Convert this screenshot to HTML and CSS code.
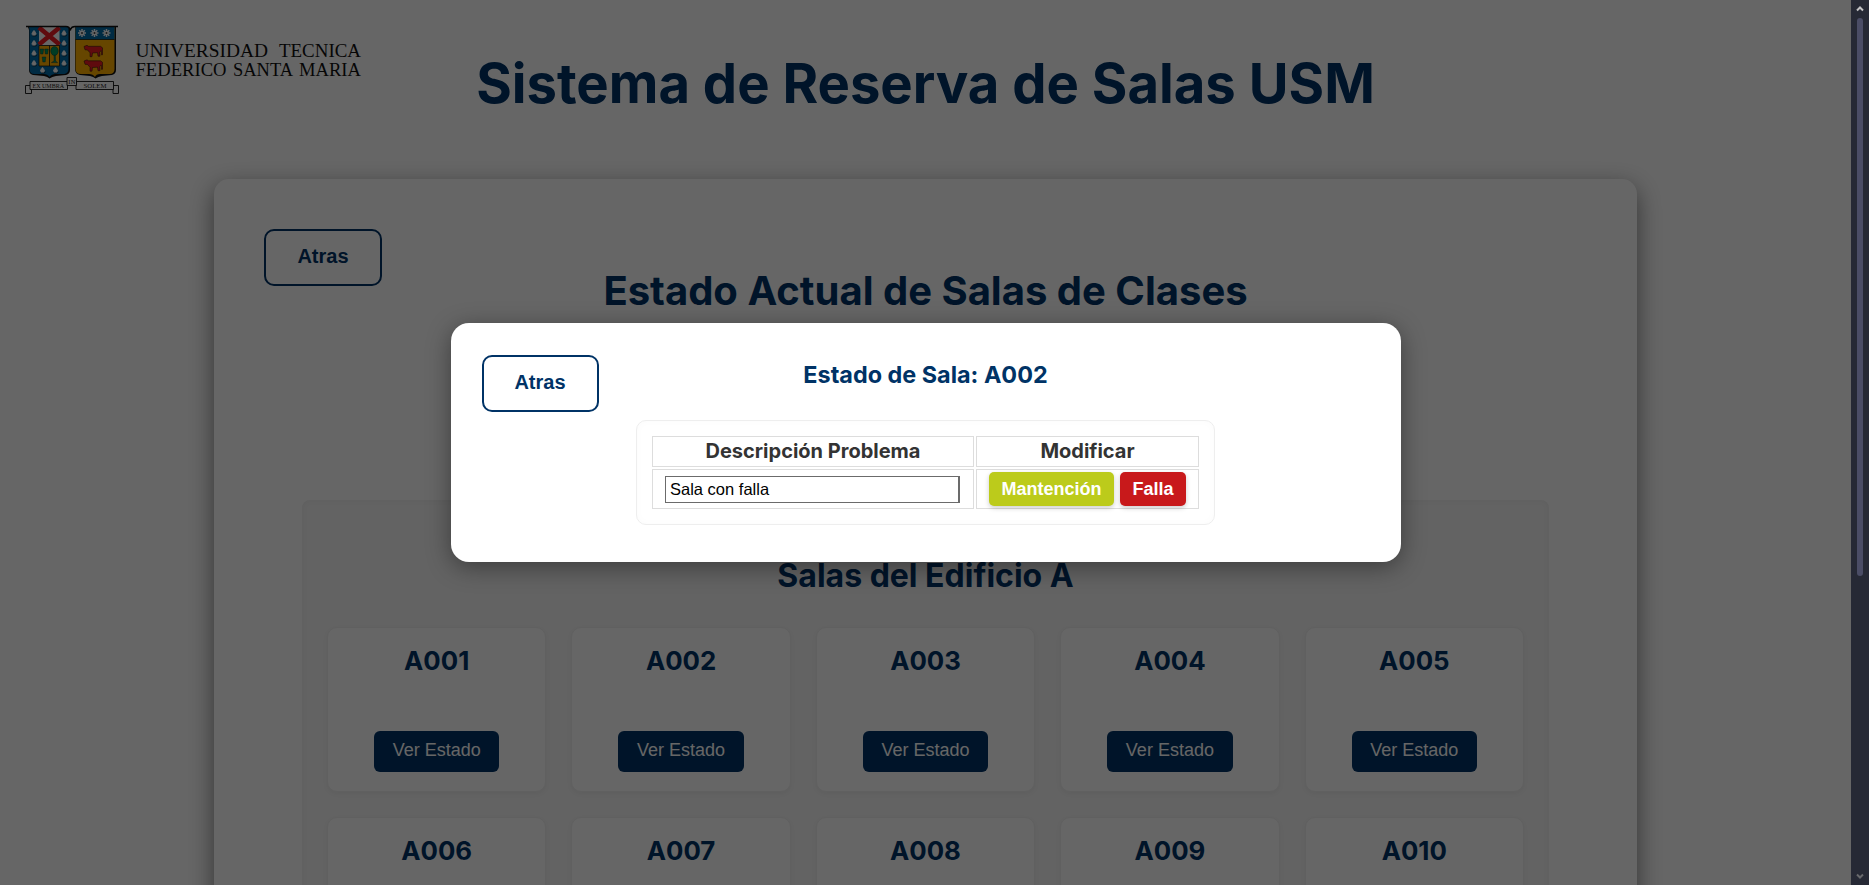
FILE: index.html
```html
<!DOCTYPE html>
<html lang="es">
<head>
<meta charset="utf-8">
<title>Sistema de Reserva de Salas USM</title>
<link rel="stylesheet" href="styles.css">
</head>
<body>
<div class="page">
  <header class="header">
    <svg class="logo" viewBox="0 0 340 72" width="340" height="72">
      <defs>
        <g id="rose"><circle r="2.1" fill="#f4f4f4"/><path d="M-2.5 .8h5M0-2.8v5M-1.500 2.200h3" stroke="#fff" stroke-width="1.300"/><path d="M-1.500 3h3.500l1-1.500" fill="none" stroke="#111" stroke-width=".6"/></g>
        <g id="star"><path d="M0-4V4M-4 0H4M-2.800-2.800l5.600 5.600M2.800-2.800l-5.600 5.600" stroke="#fff" stroke-width="1.500"/><circle r="1" fill="#444"/></g>
        <path id="bull" d="M0 1.500l3-1.200 1.500 1h12l2 1.500v7h-1.200V5.500l-1.800 1.700.5 4h-2l-.5-3.500-5 .3-.5 3.700h-2V7.800L3.500 5 1 4.800z"/>
        <path id="pot" d="M-1.800 0h3.600l-.6 5h-2.400z"/>
      </defs>
      <path d="M3 3h40l2 2v41q0 4-4 5l-10 1q-4 .5-6.500 2.500-2-2-5.500-2.500l-11-1q-4-1-4-5V6z" fill="#111"/>
      <path d="M4 3h39.500v42q0 4-4 5h-9q-4 0-6 3-2-3-6-3h-9q-5 0-5-5V6z" fill="#006ba8"/>
      <path d="M14 2.500h20.500V21H14z" fill="#fff"/>
      <path d="M14 3.500L34.500 20.500M34.500 3.500L14 20.500" stroke="#ed1c24" stroke-width="4.600"/>
      <path d="M14 21.500h20.500V42H14z" fill="#ffb000" stroke="#111" stroke-width=".7"/>
      <path d="M24.500 21.500V42" stroke="#111" stroke-width=".8"/>
      <g fill="#00975b" stroke="#123" stroke-width=".4"><use href="#pot" x="16.800" y="25"/><use href="#pot" x="21.500" y="25"/><use href="#pot" x="19" y="33"/><ellipse cx="29.500" cy="27" rx="3.800" ry="4.500"/><path d="M29 31h1.300l.3 6 2 1.600h-6.200L29 37z"/></g>
      <use href="#rose" x="9" y="9"/><use href="#rose" x="9" y="19"/><use href="#rose" x="9" y="29"/><use href="#rose" x="9" y="39"/>
      <use href="#rose" x="39" y="9"/><use href="#rose" x="39" y="19"/><use href="#rose" x="39" y="29"/><use href="#rose" x="39" y="39"/>
      <use href="#rose" x="17.500" y="46"/><use href="#rose" x="30.500" y="46"/>
      <path d="M50 3h41v43q0 4-4 5l-10 1q-4 .5-6.500 2.500-2-2-5.500-2.500l-10-1q-5-1-5-6z" fill="#111"/>
      <path d="M50.500 3H89.500v42q0 5-5 5H75q-4 0-5 3-2-3-6-3h-8q-5.500 0-5.500-5z" fill="#ffb000"/>
      <path d="M50.500 3H89.500v12.500H50.500z" fill="#006ba8"/>
      <path d="M50.500 15.500h39" stroke="#111" stroke-width=".7"/>
      <use href="#star" x="57" y="9"/><use href="#star" x="69.500" y="9"/><use href="#star" x="81.500" y="9"/>
      <use href="#bull" x="59" y="21" fill="#ed1c24" stroke="#111" stroke-width=".5"/><use href="#bull" x="59" y="35.500" fill="#ed1c24" stroke="#111" stroke-width=".5"/>
      <path d="M1 2.500h40q3.500 0 4.500 4V5.500q1-3 4.500-3h43" fill="none" stroke="#111" stroke-width="1.300"/>
      <g fill="#fff" stroke="#111" stroke-width=".9">
        <path d="M.5 61.500h6v8h-6zM88 61.500h5.500v8H88z"/>
        <path d="M5 57.500h37.500v8H5zM51 57.500h37.500v8H51z"/>
        <path d="M42 53.500h9.500v8H42z"/>
      </g>
      <g class="motto"><text x="7.500" y="63.800" textLength="31.500" lengthAdjust="spacingAndGlyphs">EX UMBRA</text><text x="43.200" y="59.700" textLength="7.200">IN</text><text x="58.500" y="63.800" textLength="23" lengthAdjust="spacingAndGlyphs">SOLEM</text></g>
      <g class="wordmark">
        <text x="110.500" y="33" textLength="132.500" lengthAdjust="spacingAndGlyphs">UNIVERSIDAD</text>
        <text x="254" y="33" textLength="82" lengthAdjust="spacingAndGlyphs">TECNICA</text>
        <text x="110.500" y="52" textLength="91" lengthAdjust="spacingAndGlyphs">FEDERICO</text>
        <text x="208" y="52" textLength="60" lengthAdjust="spacingAndGlyphs">SANTA</text>
        <text x="274" y="52" textLength="62" lengthAdjust="spacingAndGlyphs">MARIA</text>
      </g>
    </svg>
    <h1 class="title">Sistema de Reserva de Salas USM</h1>
  </header>
  <main class="panel">
    <button class="back">Atras</button>
    <h2 class="panel-title">Estado Actual de Salas de Clases</h2>
    <section class="building">
      <h3 class="building-title">Salas del Edificio A</h3>
      <div class="rooms">
        <article class="room"><h4>A001</h4><button>Ver Estado</button></article>
        <article class="room"><h4>A002</h4><button>Ver Estado</button></article>
        <article class="room"><h4>A003</h4><button>Ver Estado</button></article>
        <article class="room"><h4>A004</h4><button>Ver Estado</button></article>
        <article class="room"><h4>A005</h4><button>Ver Estado</button></article>
        <article class="room"><h4>A006</h4></article>
        <article class="room"><h4>A007</h4></article>
        <article class="room"><h4>A008</h4></article>
        <article class="room"><h4>A009</h4></article>
        <article class="room"><h4>A010</h4></article>
      </div>
    </section>
  </main>
</div>
<div class="overlay">
  <div class="modal">
    <button class="back modal-back">Atras</button>
    <h2 class="modal-title">Estado de Sala: A002</h2>
    <div class="table-box">
      <table class="table">
        <tr><th class="col-desc">Descripción Problema</th><th class="col-mod">Modificar</th></tr>
        <tr>
          <td><input class="desc" type="text" value="Sala con falla"></td>
          <td><div class="actions"><button class="action maint">Mantención</button><button class="action fault">Falla</button></div></td>
        </tr>
      </table>
    </div>
  </div>
</div>
<div class="scrollbar">
  <svg width="8" height="8" viewBox="0 0 8 8"><path d="M1 5.500L4 2.500l3 3" fill="none" stroke="#c3c3c5" stroke-width="2"/></svg>
  <div class="thumb"></div>
  <svg width="8" height="8" viewBox="0 0 8 8"><path d="M1 2.500l3 3 3-3" fill="none" stroke="#68696c" stroke-width="2"/></svg>
</div>
</body>
</html>
```
FILE: styles.css
```css
* { box-sizing: border-box; }
body {
  margin: 0;
  height: 885px;
  overflow: hidden;
  background: #fff;
  color: #333;
  font-family: Inter, sans-serif;
}
h1, h2, h3, h4 { margin: 0; color: #003366; text-align: center; white-space: nowrap; }
button, input { font-family: "Liberation Sans", Arial, sans-serif; }
.page { width: 1851px; height: 885px; overflow: hidden; }
.header { position: relative; height: 179px; padding-top: 49px; }
.logo { position: absolute; left: 25px; top: 24px; }
.motto { font: 6.5px "Liberation Serif", serif; fill: #222; }
.wordmark { font: 18.5px "Liberation Serif", serif; fill: #111; }
.title { font-size: 54.4px; line-height: 68px; font-weight: 700; }
.panel {
  position: relative;
  width: 1423px;
  height: 1400px;
  margin: 0 auto;
  padding: 88px 88px 0;
  background: #fff;
  border-radius: 15px;
  box-shadow: 0 8px 25px rgba(0, 0, 0, .5);
}
.back {
  position: absolute;
  left: 50px;
  top: 50px;
  width: 118px;
  height: 57px;
  padding: 0 0 2px;
  border: 2px solid #003366;
  border-radius: 10px;
  background: #fff;
  color: #003366;
  font-size: 20px;
  font-weight: 700;
}
.panel-title { font-size: 40px; line-height: 48px; font-weight: 700; }
.building {
  height: 1000px;
  margin-top: 185px;
  padding: 56px 25px 0;
  background: #f7f7f7;
  border-radius: 8px;
  box-shadow: inset 0 0 6px rgba(0, 0, 0, .05);
}
.building-title { font-size: 32px; line-height: 40px; font-weight: 700; }
.rooms { display: grid; grid-template-columns: repeat(5, 1fr); gap: 25px; margin-top: 31px; }
.room {
  display: flex;
  flex-direction: column;
  justify-content: space-between;
  align-items: center;
  height: 165px;
  padding: 16px 0 19px;
  background: #fff;
  border: 1px solid #f0f0f0;
  border-radius: 10px;
  box-shadow: 0 2px 5px rgba(0, 0, 0, .05);
}
.room h4 { font-size: 25.8px; line-height: 34px; font-weight: 700; }
.room button {
  width: 125.5px;
  height: 41px;
  padding: 0 0 2px;
  border: 0;
  border-radius: 6px;
  background: #003366;
  color: #fff;
  font-size: 18px;
}
.overlay {
  position: absolute;
  inset: 0 18px 0 0;
  display: flex;
  align-items: center;
  justify-content: center;
  background: rgba(0, 0, 0, .6);
}
.modal {
  position: relative;
  width: 950px;
  height: 239px;
  padding-top: 37px;
  background: #fff;
  border-radius: 18px;
  box-shadow: 0 5px 25px rgba(0, 0, 0, .4);
}
.modal-back { left: 31px; top: 32px; width: 117px; }
.modal-title { font-size: 23.4px; line-height: 29px; font-weight: 700; }
.table-box {
  width: 579px;
  height: 105px;
  margin: 31px auto 0;
  padding: 13px 13px 0;
  border: 1px solid #eee;
  border-radius: 10px;
  box-shadow: inset 0 0 8px rgba(0, 0, 0, .02);
}
.table { width: 551px; table-layout: fixed; border-collapse: separate; border-spacing: 2px; }
.table th, .table td { padding: 0; border: 1px solid #ddd; }
.table th { height: 31px; padding-bottom: 2px; font-size: 20px; line-height: 24px; font-weight: 700; }
.table td { height: 40px; }
.col-desc { width: 322px; }
.col-mod { width: 223px; }
.desc {
  display: block;
  width: 295px;
  height: 27px;
  margin: 0 0 0 12px;
  padding: 0 4px;
  border: 1px solid #6b6b6b;
  border-right-width: 2px;
  border-radius: 0;
  background: #fff;
  color: #000;
  font-size: 16.5px;
}
.actions { display: flex; justify-content: center; gap: 6px; }
.action {
  height: 34px;
  padding: 0;
  border: 0;
  border-radius: 5px;
  color: #fff;
  font-size: 18px;
  font-weight: 700;
  box-shadow: 0 2px 5px rgba(0, 0, 0, .2);
}
.maint { width: 125px; background: #bccb1b; }
.fault { width: 66px; background: #c8191b; }
.scrollbar {
  position: absolute;
  top: 0;
  right: 0;
  width: 18px;
  height: 885px;
  padding: 5px 0 5px;
  display: flex;
  flex-direction: column;
  align-items: center;
  background: #262935;
}
.thumb { width: 6px; height: 558px; margin: 5px 0 auto; border-radius: 3px; background: #4b4d66; }
```
